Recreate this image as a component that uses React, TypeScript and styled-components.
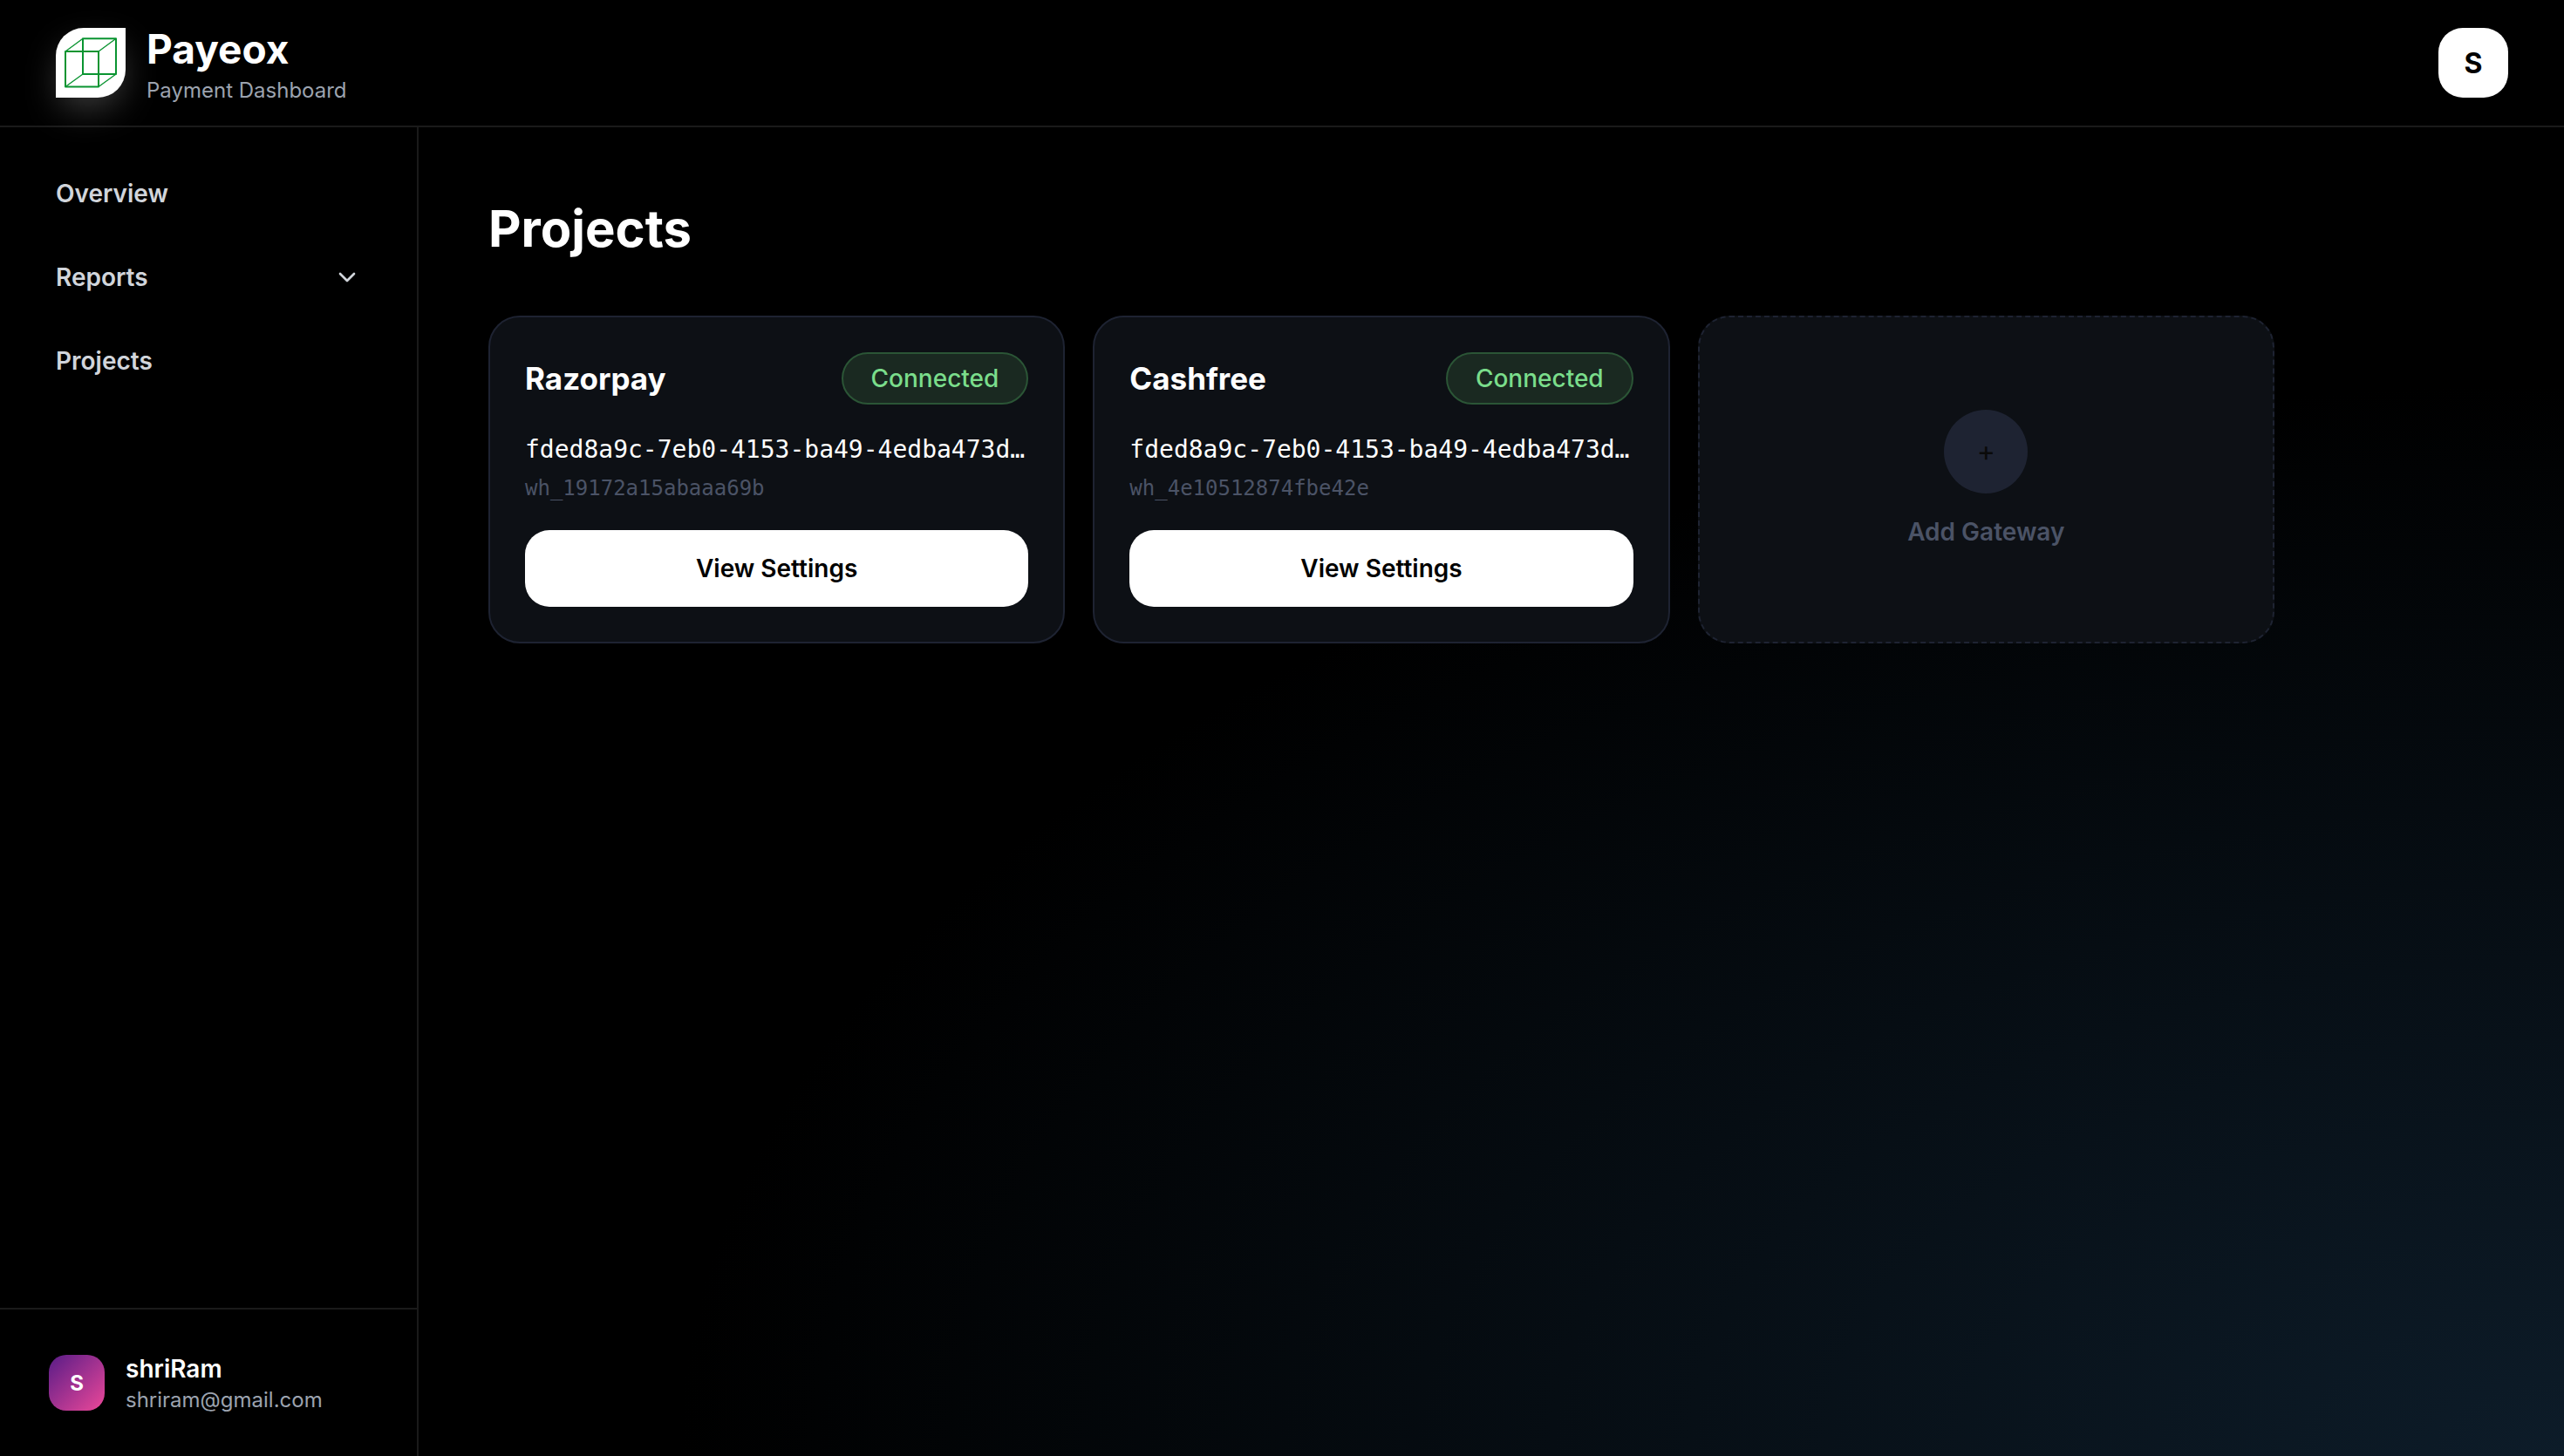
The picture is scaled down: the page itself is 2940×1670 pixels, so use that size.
import React from "react";
import styled, { createGlobalStyle } from "styled-components";

const SANS = 'Inter, "Liberation Sans", sans-serif';
const MONO = '"DejaVu Sans Mono", "Liberation Mono", monospace';

const GlobalStyle = createGlobalStyle`
  *, *::before, *::after { box-sizing: border-box; }
  body {
    margin: 0;
    background: #000;
    color: #fff;
    font-family: ${SANS};
  }
  h1, h2, p, ul { margin: 0; padding: 0; }
  button { font-family: inherit; cursor: pointer; }
`;

const Page = styled.div`
  min-height: 100vh;
  display: flex;
  flex-direction: column;
  background: radial-gradient(ellipse at 100% 100%, #0d1c29 0%, #000 52%);
`;

const Header = styled.header`
  display: flex;
  align-items: center;
  justify-content: space-between;
  height: 146px;
  padding: 0 64px;
  border-bottom: 2px solid #1a1a1a;
  background: #000;
`;

const Brand = styled.div`
  display: flex;
  align-items: center;
  gap: 24px;
`;

const LogoTile = styled.div`
  width: 80px;
  height: 80px;
  border-radius: 32px 0 32px 0;
  background: #fff;
  box-shadow: 0 16px 40px -6px rgba(255, 255, 255, 0.25);
`;

const BrandText = styled.div`
  display: flex;
  flex-direction: column;
`;

const BrandName = styled.span`
  font-size: 46px;
  line-height: 64px;
  font-weight: 700;
`;

const Muted = styled.span`
  font-size: 24px;
  line-height: 32px;
  color: #9ca3af;
`;

const AccountButton = styled.button`
  width: 80px;
  height: 80px;
  padding: 0;
  border: 0;
  border-radius: 28px;
  background: #fff;
  color: #000;
  font-size: 32px;
  font-weight: 700;
`;

const Body = styled.div`
  flex: 1;
  display: flex;
`;

const Sidebar = styled.aside`
  flex: 0 0 480px;
  display: flex;
  flex-direction: column;
  justify-content: space-between;
  border-right: 2px solid #1a1a1a;
`;

const Nav = styled.nav`
  display: flex;
  flex-direction: column;
  gap: 8px;
  padding: 32px;
`;

const NavLink = styled.a`
  display: flex;
  align-items: center;
  justify-content: space-between;
  height: 88px;
  padding: 0 32px;
  color: #d1d5db;
  font-size: 28px;
  line-height: 40px;
  font-weight: 600;
  text-decoration: none;
`;

const NavButton = styled(NavLink).attrs({ as: "button", type: "button" })`
  border: 0;
  background: none;
`;

const UserPanel = styled.div`
  display: flex;
  align-items: center;
  gap: 24px;
  padding: 48px 56px;
  border-top: 2px solid #1a1a1a;
`;

const UserAvatar = styled.span`
  display: grid;
  place-items: center;
  width: 64px;
  height: 64px;
  border-radius: 20px;
  background: linear-gradient(135deg, #581c87, #ec4899);
  font-size: 24px;
  font-weight: 700;
`;

const UserText = styled.div`
  display: flex;
  flex-direction: column;
`;

const UserName = styled.span`
  font-size: 28px;
  line-height: 40px;
  font-weight: 600;
`;

const Main = styled.main`
  flex: 1;
  min-width: 0;
  padding: 80px;
`;

const PageTitle = styled.h1`
  margin-bottom: 64px;
  font-size: 58px;
  line-height: 72px;
  font-weight: 700;
`;

const CardGrid = styled.div`
  display: grid;
  grid-template-columns: repeat(3, minmax(0, 1fr));
  gap: 32px;
  max-width: 2048px;
`;

const Card = styled.section`
  display: flex;
  flex-direction: column;
  padding: 40px;
  border: 2px solid #1e2332;
  border-radius: 36px;
  background: #0d1015;
`;

const CardHead = styled.div`
  display: flex;
  align-items: center;
  justify-content: space-between;
  margin-bottom: 32px;
`;

const CardTitle = styled.h2`
  font-size: 35px;
  line-height: 56px;
  font-weight: 700;
`;

const Badge = styled.span`
  padding: 8px 32px;
  border: 2px solid #2b5536;
  border-radius: 30px;
  background: #1a2921;
  color: #7add8b;
  font-size: 28px;
  line-height: 40px;
  font-weight: 500;
`;

const ProjectId = styled.p`
  margin-bottom: 8px;
  font-family: ${MONO};
  font-size: 28px;
  line-height: 40px;
  white-space: nowrap;
`;

const WebhookId = styled.p`
  margin-bottom: 32px;
  color: #4b5366;
  font-family: ${MONO};
  font-size: 24px;
  line-height: 32px;
`;

const SettingsButton = styled.button`
  height: 88px;
  border: 0;
  border-radius: 28px;
  background: #fff;
  color: #000;
  font-size: 28px;
  line-height: 40px;
  font-weight: 600;
`;

const AddCard = styled.button`
  display: flex;
  flex-direction: column;
  align-items: center;
  justify-content: center;
  gap: 24px;
  border: 2px dashed #1e2332;
  border-radius: 36px;
  background: #0d1015;
  color: #4b5366;
  font-size: 28px;
  line-height: 40px;
  font-weight: 600;
`;

const PlusCircle = styled.span`
  display: grid;
  place-items: center;
  width: 96px;
  height: 96px;
  border-radius: 50%;
  background: #1e2332;
  color: #0a0a0a;
  font-size: 32px;
  font-weight: 400;
`;

const projects = [
  { name: "Razorpay", status: "Connected", id: "fded8a9c-7eb0-4153-ba49-4edba473d…", webhook: "wh_19172a15abaaa69b" },
  { name: "Cashfree", status: "Connected", id: "fded8a9c-7eb0-4153-ba49-4edba473d…", webhook: "wh_4e10512874fbe42e" },
];

const CubeLogo = () => (
  <svg width="80" height="80" viewBox="0 0 80 80" fill="none" stroke="#0a9431" strokeLinejoin="round" aria-hidden="true">
    <rect x="11" y="27" width="38" height="40.5" strokeWidth="2" />
    <rect x="31" y="12.3" width="38" height="40.7" strokeWidth="2" />
    <path d="M11 27 31 12.3M49 27 69 12.3M49 67.5 69 53M11 67.5 31 53" strokeWidth="1.4" />
  </svg>
);

const Chevron = () => (
  <svg width="32" height="32" viewBox="0 0 24 24" fill="none" stroke="currentColor" strokeWidth="2" strokeLinecap="round" strokeLinejoin="round" aria-hidden="true">
    <path d="m6 9 6 6 6-6" />
  </svg>
);

export default function App() {
  return (
    <>
      <GlobalStyle />
      <Page>
        <Header>
          <Brand>
            <LogoTile>
              <CubeLogo />
            </LogoTile>
            <BrandText>
              <BrandName>Payeox</BrandName>
              <Muted>Payment Dashboard</Muted>
            </BrandText>
          </Brand>
          <AccountButton type="button">S</AccountButton>
        </Header>
        <Body>
          <Sidebar>
            <Nav>
              <NavLink href="#overview">Overview</NavLink>
              <NavButton>
                Reports
                <Chevron />
              </NavButton>
              <NavLink href="#projects">Projects</NavLink>
            </Nav>
            <UserPanel>
              <UserAvatar>S</UserAvatar>
              <UserText>
                <UserName>shriRam</UserName>
                <Muted>shriram@gmail.com</Muted>
              </UserText>
            </UserPanel>
          </Sidebar>
          <Main>
            <PageTitle>Projects</PageTitle>
            <CardGrid>
              {projects.map((project) => (
                <Card key={project.name}>
                  <CardHead>
                    <CardTitle>{project.name}</CardTitle>
                    <Badge>{project.status}</Badge>
                  </CardHead>
                  <ProjectId>{project.id}</ProjectId>
                  <WebhookId>{project.webhook}</WebhookId>
                  <SettingsButton type="button">View Settings</SettingsButton>
                </Card>
              ))}
              <AddCard type="button">
                <PlusCircle>+</PlusCircle>
                Add Gateway
              </AddCard>
            </CardGrid>
          </Main>
        </Body>
      </Page>
    </>
  );
}
